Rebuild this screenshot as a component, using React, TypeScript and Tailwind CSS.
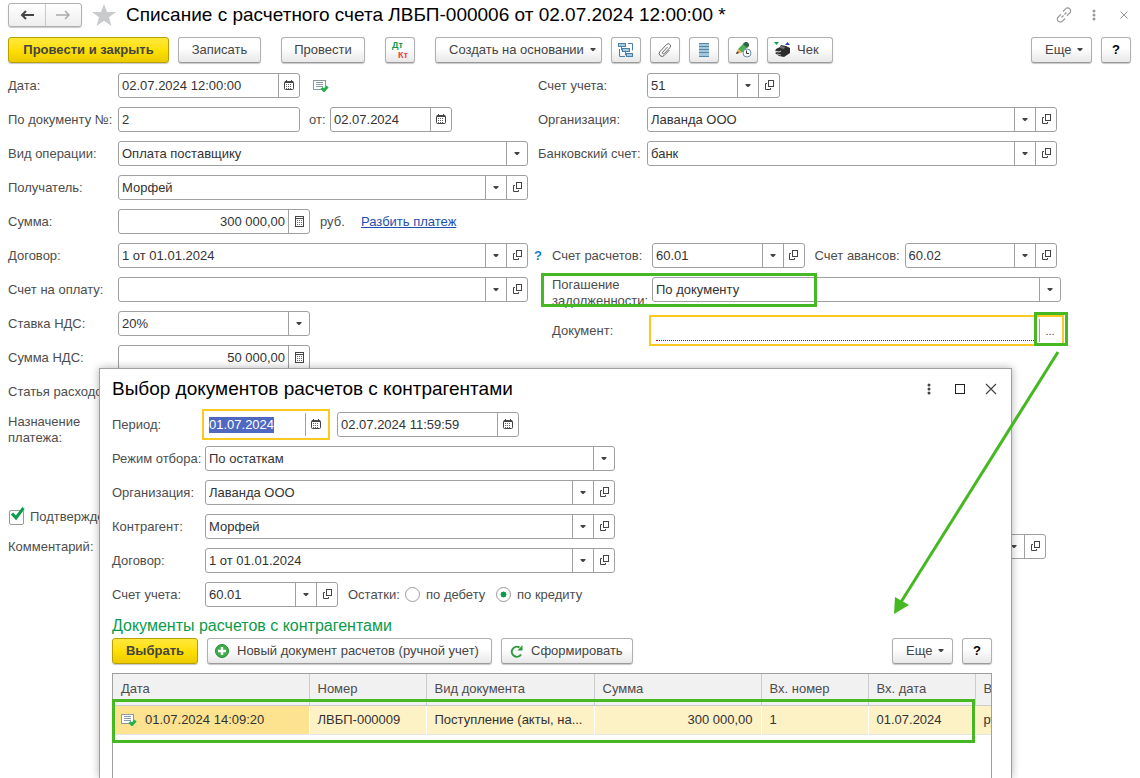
import { useState } from "react";
import type { ReactNode } from "react";

const ArrowDown = () => (
  <svg width="6" height="6" viewBox="0 0 6 6" fill="currentColor" aria-hidden="true">
    <path d="M0.500 1h5v1L3.500 4h-1L0.500 2z" />
  </svg>
);

const OpenIcon = () => (
  <svg width="11" height="12" viewBox="0 0 11 12" fill="none" stroke="currentColor" aria-hidden="true">
    <rect x="4.500" y="0.500" width="5" height="6" />
    <path d="M3 3.500H1.500v6h5V8" />
  </svg>
);

const CalendarIcon = () => (
  <svg width="10" height="12" viewBox="0 0 10 12" aria-hidden="true">
    <rect x="0.500" y="1.500" width="9" height="8" rx="1" fill="#fff" stroke="#444" />
    <path d="M1 1h8v2H1zM2 0h1v1H2zM7 0h1v1H7z" fill="#444" />
    <path d="M2 4.500h6M2 6.500h6M2 8.500h6" stroke="#666" strokeDasharray="1 1" />
  </svg>
);

const CalcIcon = () => (
  <svg width="9" height="12" viewBox="0 0 9 12" aria-hidden="true">
    <rect x="0.500" y="0.500" width="8" height="10" fill="#fff" stroke="#444" />
    <path d="M0 2.500h9" stroke="#444" />
    <path d="M2 4.500h5M2 6.500h5M2 8.500h5" stroke="#666" strokeDasharray="1 1" />
  </svg>
);

const PostedIcon = () => (
  <svg width="16" height="13" viewBox="0 0 16 13" fill="none" aria-hidden="true">
    <rect x="0.500" y="1.500" width="12" height="9" fill="#fff" stroke="#8a9aa5" />
    <path d="M3 3.500h7M3 5.500h7M3 7.500h7" stroke="#8a9aa5" />
    <path d="M8.500 9l2.500 2.500L14.500 7.500" stroke="#2ab04a" strokeWidth="3" />
  </svg>
);

const DotsIcon = () => (
  <svg width="4" height="12" viewBox="0 0 4 12" fill="currentColor" aria-hidden="true">
    <circle cx="2" cy="2" r="1.500" />
    <circle cx="2" cy="6" r="1.500" />
    <circle cx="2" cy="10" r="1.500" />
  </svg>
);

const buttonClass =
  "flex h-[26px] items-center rounded-[3px] border border-[#b0b0b0] border-b-[#9a9a9a] bg-linear-to-b from-white from-40% to-[#e8e8e8] text-[13px] text-[#444] shadow-[0_1px_1px_#c8c8c8]";
const primaryClass =
  "flex h-[26px] items-center justify-center rounded-[3px] border border-[#b89f00] bg-linear-to-b from-[#ffe838] via-[#ffe000] to-[#ebca00] text-[13px] font-bold text-[#444] shadow-[0_1px_1px_#c8c8c8]";

type FieldIcon = "list" | "open" | "calendar" | "calc" | "dots";

const iconNames: Record<FieldIcon, string> = {
  list: "Выбрать из списка",
  open: "Открыть",
  calendar: "Календарь",
  calc: "Калькулятор",
  dots: "Выбрать",
};

const icons: Record<FieldIcon, ReactNode> = {
  list: <ArrowDown />,
  open: <OpenIcon />,
  calendar: <CalendarIcon />,
  calc: <CalcIcon />,
  dots: <span className="text-[11px]">...</span>,
};

interface FieldProps {
  id: string;
  value?: string;
  buttons?: FieldIcon[];
  className?: string;
  align?: "left" | "right";
  active?: boolean;
  required?: boolean;
}

const Field = ({
  id,
  value = "",
  buttons = [],
  className = "flex-1",
  align = "left",
  active = false,
  required = false,
}: FieldProps) => {
  const [text, setText] = useState(value);
  return (
    <div
      className={`flex h-[25px] min-w-0 border bg-white ${
        active
          ? "border-white outline-2 outline-offset-1 outline-[#fbc91f]"
          : "rounded-[3px] border-[#a0a0a0]"
      } ${className}`}
    >
      <div className="flex min-w-0 flex-1 items-center px-[3px]">
        <input
          id={id}
          value={text}
          onChange={(event) => setText(event.target.value)}
          className={`min-w-0 text-[13px] outline-none ${align === "right" ? "text-right" : ""} ${
            active && !required ? "w-[65px] bg-[#4f69c0] text-white" : "w-full text-[#333]"
          } ${required ? "h-5 border-b border-dotted border-b-[#d00000]" : ""}`}
        />
      </div>
      {buttons.map((name) => (
        <button
          key={name}
          type="button"
          aria-label={iconNames[name]}
          className="flex w-[21px] shrink-0 items-center justify-center border-l border-[#a0a0a0] text-[#444]"
        >
          {icons[name]}
        </button>
      ))}
    </div>
  );
};

const SelectField = ({
  id,
  value,
  className = "flex-1",
}: {
  id: string;
  value: string;
  className?: string;
}) => (
  <div className={`flex h-[25px] min-w-0 rounded-[3px] border border-[#a0a0a0] bg-white ${className}`}>
    <select
      id={id}
      className="min-w-0 flex-1 appearance-none px-[3px] text-[13px] text-[#333] outline-none"
    >
      <option>{value}</option>
    </select>
    <span className="flex w-[21px] items-center justify-center border-l border-[#a0a0a0] text-[#444]">
      <ArrowDown />
    </span>
  </div>
);

const Row = ({
  id,
  label,
  labelClass = "w-[110px]",
  children,
}: {
  id: string;
  label: string;
  labelClass?: string;
  children?: ReactNode;
}) => (
  <div className="flex h-[25px] items-center">
    <label htmlFor={id} className={`shrink-0 whitespace-nowrap ${labelClass}`}>
      {label}
    </label>
    {children}
  </div>
);

const Header = () => (
  <header className="flex h-[30px] items-center pr-3 pl-2">
    <div className="flex h-6 w-[74px] rounded-[3px] border border-[#b0b0b0] bg-linear-to-b from-white to-[#eee] shadow-[0_1px_1px_#c8c8c8]">
      <button type="button" aria-label="Назад" className="flex flex-1 items-center justify-center border-r border-[#c8c8c8]">
        <svg width="14" height="10" viewBox="0 0 14 10" fill="none" stroke="#444" strokeWidth="2">
          <path d="M14 5H2M6 1L2 5l4 4" />
        </svg>
      </button>
      <button type="button" aria-label="Вперед" className="flex flex-1 items-center justify-center">
        <svg width="14" height="10" viewBox="0 0 14 10" fill="none" stroke="#aaa" strokeWidth="1.500">
          <path d="M0 5h13M9 1l4 4-4 4" />
        </svg>
      </button>
    </div>
    <button type="button" aria-label="В избранное" className="ml-2.5">
      <svg width="24" height="22" viewBox="0 0 24 22" fill="#c9cacc">
        <path d="M12 0l3 8h9l-7 5.300L19.500 22 12 16.800 4.500 22 7 13.300 0 8h9z" />
      </svg>
    </button>
    <h1 className="ml-2.5 flex-1 text-[19px] whitespace-nowrap text-black">
      Списание с расчетного счета ЛВБП-000006 от 02.07.2024 12:00:00 *
    </h1>
    <div className="flex items-center text-[#999]">
      <button type="button" aria-label="Ссылка">
        <svg width="16" height="16" viewBox="0 0 16 16" fill="none" stroke="currentColor" strokeWidth="1.200">
          <path d="M7 4.500l2.500-2.700a2.800 2.800 0 0 1 4.200 0 2.800 2.800 0 0 1 0 4.200l-2.800 2.700M9 11.500l-2.500 2.700a2.800 2.800 0 0 1-4.200 0 2.800 2.800 0 0 1 0-4.200L5 7.300M5.500 10.500l2-2M8.500 7.500l2-2" />
        </svg>
      </button>
      <button type="button" aria-label="Меню" className="ml-5">
        <DotsIcon />
      </button>
      <button type="button" aria-label="Закрыть" className="ml-6">
        <svg width="8" height="8" viewBox="0 0 8 8" stroke="currentColor">
          <path d="M0.500 0.500l7 7M7.500 0.500l-7 7" />
        </svg>
      </button>
    </div>
  </header>
);

const Toolbar = () => (
  <div className="flex items-center pt-[7px] pr-[9px] pl-2">
    <button type="button" className={`${primaryClass} w-[161px]`}>
      Провести и закрыть
    </button>
    <button type="button" className={`${buttonClass} ml-[9px] w-[83px] justify-center`}>
      Записать
    </button>
    <button type="button" className={`${buttonClass} ml-5 w-[84px] justify-center`}>
      Провести
    </button>
    <button type="button" aria-label="Дт Кт" className={`${buttonClass} ml-5 w-[30px] justify-center`}>
      <span className="flex flex-col text-left text-[9px] leading-[10px] font-bold">
        <span className="text-[#0a9b4b]">Дт</span>
        <span className="pl-1.5 text-[#e8413c]">Кт</span>
      </span>
    </button>
    <button type="button" className={`${buttonClass} ml-5 w-[167px] gap-1.5 pl-[13px]`}>
      Создать на основании <ArrowDown />
    </button>
    <div className="ml-[9px] flex gap-[9px]">
      <button type="button" aria-label="Структура подчиненности" className={`${buttonClass} w-[30px] justify-center`}>
        <svg width="16" height="16" viewBox="0 0 16 16" fill="none" stroke="#4a80a8">
          <path d="M10 1.500h4.500v7M1.500 7v7.500H7M3.500 4v4H6M7.500 9v4H9" />
          <rect x="0.500" y="1.500" width="7" height="3" fill="#a9c9df" />
          <rect x="4.500" y="6.500" width="7" height="3" fill="#a9c9df" />
          <rect x="8.500" y="11.500" width="6" height="3" fill="#a9c9df" />
        </svg>
      </button>
      <button type="button" aria-label="Присоединенные файлы" className={`${buttonClass} w-[30px] justify-center`}>
        <svg width="14" height="14" viewBox="0 0 14 14" fill="none" stroke="#666">
          <path d="M9.500 4L4.800 9a1 1 0 0 0 1.600 1.500L12 4.500a2.200 2.200 0 0 0-3.400-3L2 8.500a2.800 2.800 0 0 0 4.200 4L11.500 7" />
        </svg>
      </button>
      <button type="button" aria-label="Реестр" className={`${buttonClass} w-[30px] justify-center`}>
        <svg width="10" height="14" viewBox="0 0 10 14">
          <path d="M0 0h10v14H0z" fill="#a3c6dd" />
          <path d="M0 0.500h10M0 3.500h10M0 6.500h10M0 9.500h10M0 13.500h10" stroke="#5587a8" />
        </svg>
      </button>
      <button type="button" aria-label="Задача" className={`${buttonClass} w-[30px] justify-center`}>
        <svg width="17" height="16" viewBox="0 0 17 16">
          <path d="M3 7l6-6 4 3.500-6 6z" fill="#4fb053" />
          <path d="M8 2l2-2h2l2 2v2l-2 2z" fill="#35614a" />
          <path d="M1 12l2-5 4 3.500z" fill="#e5a35b" />
          <path d="M1 12l1-2.500 2 1.500z" fill="#333" />
          <circle cx="12" cy="11" r="4" fill="#fff" stroke="#6690ad" />
          <path d="M11.500 8.500v3H14" fill="none" stroke="#333" />
        </svg>
      </button>
      <button type="button" className={`${buttonClass} w-[66px] gap-1.5 pl-1.5`}>
        <svg width="17" height="16" viewBox="0 0 17 16">
          <path d="M0 0h5L2.500 3z" fill="#10a04a" />
          <path d="M11 3h5l-2.500-3z" fill="#3040b8" />
          <path d="M1 9l1-2 4-2 1-2 5 1 4 2v5l-6 4-5-1-4-3 2-1z" fill="#2c2c2c" />
          <path d="M7 4l4 1-1 2-4-1z" fill="#777" />
          <path d="M1 9l4 1 2-1" stroke="#ddd" fill="none" />
          <path d="M3 12l4 1" stroke="#aaa" />
        </svg>
        Чек
      </button>
    </div>
    <button type="button" className={`${buttonClass} ml-auto w-[61px] gap-1.5 pl-[13px]`}>
      Еще <ArrowDown />
    </button>
    <button type="button" className={`${buttonClass} ml-[9px] w-[30px] justify-center font-bold text-black`}>
      ?
    </button>
  </div>
);

const PaymentForm = () => (
  <form className="pt-2.5 pr-[79px] pl-2">
    <div className="grid grid-cols-[520fr_527fr] gap-x-1.5">
      <div className="flex flex-col gap-[9px]">
        <Row id="date" label="Дата:">
          <Field id="date" value="02.07.2024 12:00:00" buttons={["calendar"]} className="w-[182px]" />
          <span className="ml-[13px]">
            <PostedIcon />
          </span>
        </Row>
        <Row id="docNumber" label="По документу №:">
          <Field id="docNumber" value="2" className="w-[182px]" />
          <label htmlFor="docDate" className="w-[30px] shrink-0 pl-[9px]">
            от:
          </label>
          <Field id="docDate" value="02.07.2024" buttons={["calendar"]} className="w-[122px]" />
        </Row>
        <Row id="operation" label="Вид операции:">
          <SelectField id="operation" value="Оплата поставщику" />
        </Row>
        <Row id="receiver" label="Получатель:">
          <Field id="receiver" value="Морфей" buttons={["list", "open"]} />
        </Row>
        <Row id="sum" label="Сумма:">
          <Field id="sum" value="300 000,00" buttons={["calc"]} align="right" className="w-[192px]" />
          <span className="w-[51px] pl-2.5">руб.</span>
          <a href="#split" className="text-[#1f4fb0] underline">
            Разбить платеж
          </a>
        </Row>
        <Row id="contract" label="Договор:">
          <Field id="contract" value="1 от 01.01.2024" buttons={["list", "open"]} />
        </Row>
        <Row id="invoice" label="Счет на оплату:">
          <Field id="invoice" buttons={["list", "open"]} />
        </Row>
        <Row id="vatRate" label="Ставка НДС:">
          <SelectField id="vatRate" value="20%" className="w-[192px]" />
        </Row>
        <Row id="vatSum" label="Сумма НДС:">
          <Field id="vatSum" value="50 000,00" buttons={["calc"]} align="right" className="w-[192px]" />
        </Row>
        <Row id="expense" label="Статья расходов:">
          <Field id="expense" buttons={["list", "open"]} />
        </Row>
      </div>

      <div className="flex flex-col gap-[9px]">
        <div className="flex flex-col gap-[9px] pr-1 pb-[68px] pl-1">
          <Row id="account" label="Счет учета:" labelClass="w-[109px]">
            <Field id="account" value="51" buttons={["list", "open"]} className="w-[133px]" />
          </Row>
          <Row id="company" label="Организация:" labelClass="w-[109px]">
            <Field id="company" value="Лаванда ООО" buttons={["list", "open"]} />
          </Row>
          <Row id="bank" label="Банковский счет:" labelClass="w-[109px]">
            <Field id="bank" value="банк" buttons={["list", "open"]} />
          </Row>
        </div>
        <div className="flex items-center pr-1">
          <button type="button" className="w-[18px] text-left font-bold text-[#1580c0]">
            ?
          </button>
          <label htmlFor="settlement" className="w-[100px] shrink-0">
            Счет расчетов:
          </label>
          <Field id="settlement" value="60.01" buttons={["list", "open"]} />
          <label htmlFor="advance" className="w-[100px] shrink-0 pl-2.5">
            Счет авансов:
          </label>
          <Field id="advance" value="60.02" buttons={["list", "open"]} />
        </div>
        <div className="relative flex h-[25px] pl-[18px]">
          <label htmlFor="repayment" className="w-[100px] shrink-0 leading-4">
            Погашение задолженности:
          </label>
          <SelectField id="repayment" value="По документу" />
          <div className="pointer-events-none absolute -top-1 left-[7px] h-[34px] w-[276px] border-3 border-[#45b822]" />
        </div>
        <div className="relative flex items-center pt-[7px] pl-[18px]">
          <label htmlFor="document" className="w-[100px] shrink-0">
            Документ:
          </label>
          <Field id="document" buttons={["dots"]} active required />
          <div className="pointer-events-none absolute top-px -right-[7px] h-[34px] w-[34px] border-3 border-[#45b822]" />
        </div>
      </div>
    </div>

    <div className="mt-2.5 flex h-[95px]">
      <label htmlFor="purpose" className="w-[110px] leading-4">
        Назначение
        <br />
        платежа:
      </label>
      <textarea id="purpose" className="w-[410px] resize-none rounded-[3px] border border-[#a0a0a0]" />
    </div>
    <label className="relative flex h-4 items-center gap-1.5 pl-px whitespace-nowrap">
      <input
        type="checkbox"
        defaultChecked
        className="peer size-[15px] appearance-none rounded-[2px] border border-[#999] bg-white"
      />
      <svg
        width="15"
        height="14"
        viewBox="0 0 15 14"
        fill="none"
        stroke="#0a9b4b"
        strokeWidth="3"
        className="pointer-events-none absolute -top-0.5 left-0.5 hidden peer-checked:block"
      >
        <path d="M2 6.500l4 4.500L13.500 1" />
      </svg>
      Подтверждено
    </label>
    <div className="pt-[9px] pr-[15px]">
      <Row id="comment" label="Комментарий:">
        <Field id="comment" buttons={["list", "open"]} />
      </Row>
    </div>
  </form>
);

const DocumentsTable = () => (
  <div className="relative mt-[9px] mr-[5px] min-h-0 flex-1 border border-b-0 border-[#a0a0a0]">
    <div className="overflow-hidden">
      <table className="w-full table-fixed border-collapse text-left whitespace-nowrap">
        <colgroup>
          <col className="w-[196px]" />
          <col className="w-[117px]" />
          <col className="w-[168px]" />
          <col className="w-[167px]" />
          <col className="w-[107px]" />
          <col className="w-[107px]" />
          <col />
        </colgroup>
        <thead>
          <tr className="h-[31px] border-b border-[#ccc] bg-[#f1f1f1] text-[#4d4d4d]">
            {["Дата", "Номер", "Вид документа", "Сумма", "Вх. номер", "Вх. дата", "Вид"].map((title) => (
              <th
                key={title}
                className="overflow-hidden border-r border-[#ccc] px-2 font-normal last:border-r-0 last:pr-0"
              >
                {title}
              </th>
            ))}
          </tr>
        </thead>
        <tbody>
          <tr className="h-[29px] border-y border-[#e4e4e4] bg-[#fdf1c6] text-[#333]">
            <td className="border-r border-white bg-[#fde390] px-2">
              <span className="flex items-center gap-2">
                <PostedIcon />
                01.07.2024 14:09:20
              </span>
            </td>
            <td className="border-r border-white px-2">ЛВБП-000009</td>
            <td className="border-r border-white px-2">Поступление (акты, на...</td>
            <td className="border-r border-white px-2 text-right">300 000,00</td>
            <td className="border-r border-white px-2">1</td>
            <td className="border-r border-white px-2">01.07.2024</td>
            <td className="overflow-hidden pl-2">руб.</td>
          </tr>
        </tbody>
      </table>
    </div>
    <div className="pointer-events-none absolute top-[25px] -left-px h-11 w-[863px] border-3 border-[#45b822]" />
  </div>
);

const DocumentsDialog = () => {
  const [balance, setBalance] = useState("credit");
  return (
    <section
      role="dialog"
      aria-labelledby="dialogTitle"
      className="absolute top-[368px] bottom-0 left-[99px] flex w-[913px] flex-col border border-b-0 border-[#a0a0a0] bg-white pr-3.5 pl-3 shadow-[0_0_8px_rgba(0,0,0,0.3)]"
    >
      <div className="mb-[3px] flex h-10 shrink-0 items-center text-[#444]">
        <h2 id="dialogTitle" className="flex-1 text-[19px] text-black">
          Выбор документов расчетов с контрагентами
        </h2>
        <button type="button" aria-label="Меню">
          <DotsIcon />
        </button>
        <button type="button" aria-label="Развернуть" className="ml-6">
          <svg width="10" height="10" viewBox="0 0 10 10" fill="none" stroke="#222">
            <rect x="0.500" y="0.500" width="9" height="9" />
          </svg>
        </button>
        <button type="button" aria-label="Закрыть" className="ml-5">
          <svg width="12" height="12" viewBox="0 0 12 12" stroke="currentColor" strokeWidth="1.200">
            <path d="M1 1l10 10M11 1L1 11" />
          </svg>
        </button>
      </div>

      <div className="flex w-[503px] flex-col gap-[9px]">
        <Row id="from" label="Период:" labelClass="w-[93px]">
          <Field id="from" value="01.07.2024" buttons={["calendar"]} active className="w-[122px]" />
          <Field id="to" value="02.07.2024 11:59:59" buttons={["calendar"]} className="ml-2.5 w-[182px]" />
        </Row>
        <Row id="mode" label="Режим отбора:" labelClass="w-[93px]">
          <SelectField id="mode" value="По остаткам" />
        </Row>
        <Row id="dCompany" label="Организация:" labelClass="w-[93px]">
          <Field id="dCompany" value="Лаванда ООО" buttons={["list", "open"]} />
        </Row>
        <Row id="dPartner" label="Контрагент:" labelClass="w-[93px]">
          <Field id="dPartner" value="Морфей" buttons={["list", "open"]} />
        </Row>
        <Row id="dContract" label="Договор:" labelClass="w-[93px]">
          <Field id="dContract" value="1 от 01.01.2024" buttons={["list", "open"]} />
        </Row>
        <Row id="dAccount" label="Счет учета:" labelClass="w-[93px]">
          <Field id="dAccount" value="60.01" buttons={["list", "open"]} className="w-[133px]" />
          <span className="w-[67px] pl-2.5">Остатки:</span>
          {[
            { id: "debit", label: "по дебету" },
            { id: "credit", label: "по кредиту" },
          ].map((item) => (
            <label key={item.id} className="flex w-[91px] shrink-0 items-center gap-1.5 whitespace-nowrap">
              <input
                type="radio"
                name="balance"
                checked={balance === item.id}
                onChange={() => setBalance(item.id)}
                className="size-[15px] shrink-0 appearance-none rounded-full border border-[#999] bg-white checked:bg-radial checked:from-[#0a9b4b] checked:from-30% checked:to-white checked:to-35%"
              />
              {item.label}
            </label>
          ))}
        </Row>
      </div>

      <h3 className="mt-[9px] text-[16px] leading-5 text-[#0a9b4b]">Документы расчетов с контрагентами</h3>
      <div className="mt-0.5 mr-[5px] flex gap-[9px]">
        <button type="button" className={`${primaryClass} w-[86px]`}>
          Выбрать
        </button>
        <button type="button" className={`${buttonClass} w-[285px] gap-2 pl-[7px]`}>
          <svg width="14" height="14" viewBox="0 0 14 14">
            <circle cx="7" cy="7" r="6.500" fill="#3fae49" stroke="#1f8a35" />
            <path d="M7 3v8M3 7h8" stroke="#fff" strokeWidth="2.400" />
          </svg>
          Новый документ расчетов (ручной учет)
        </button>
        <button type="button" className={`${buttonClass} w-[132px] gap-2 pl-2`}>
          <svg width="13" height="13" viewBox="0 0 13 13" fill="none" stroke="#2a9b3a" strokeWidth="2">
            <path d="M11 9.500A5 5 0 1 1 9.500 2.500" />
            <path d="M12.500 0v5.500H7.500z" fill="#2a9b3a" stroke="none" />
          </svg>
          Сформировать
        </button>
        <button type="button" className={`${buttonClass} ml-auto w-[61px] gap-1.5 pl-[13px]`}>
          Еще <ArrowDown />
        </button>
        <button type="button" className={`${buttonClass} w-[30px] justify-center font-bold text-black`}>
          ?
        </button>
      </div>
      <DocumentsTable />
    </section>
  );
};

const App = () => {
  return (
    <main className="relative h-screen overflow-hidden bg-white font-['Liberation_Sans',Arial,sans-serif] text-[13px] leading-4 text-[#4d4d4d]">
      <Header />
      <Toolbar />
      <PaymentForm />
      <DocumentsDialog />
      {/* arrow from the select button to the dialog */}
      <svg
        width="176"
        height="270"
        viewBox="0 0 176 270"
        className="pointer-events-none absolute top-[348px] left-[888px]"
        aria-hidden="true"
      >
        <path d="M170 4L13 254" stroke="#45b822" strokeWidth="3" />
        <path d="M6 266l1-17 14 8z" fill="#45b822" />
      </svg>
    </main>
  );
};

export default App;
